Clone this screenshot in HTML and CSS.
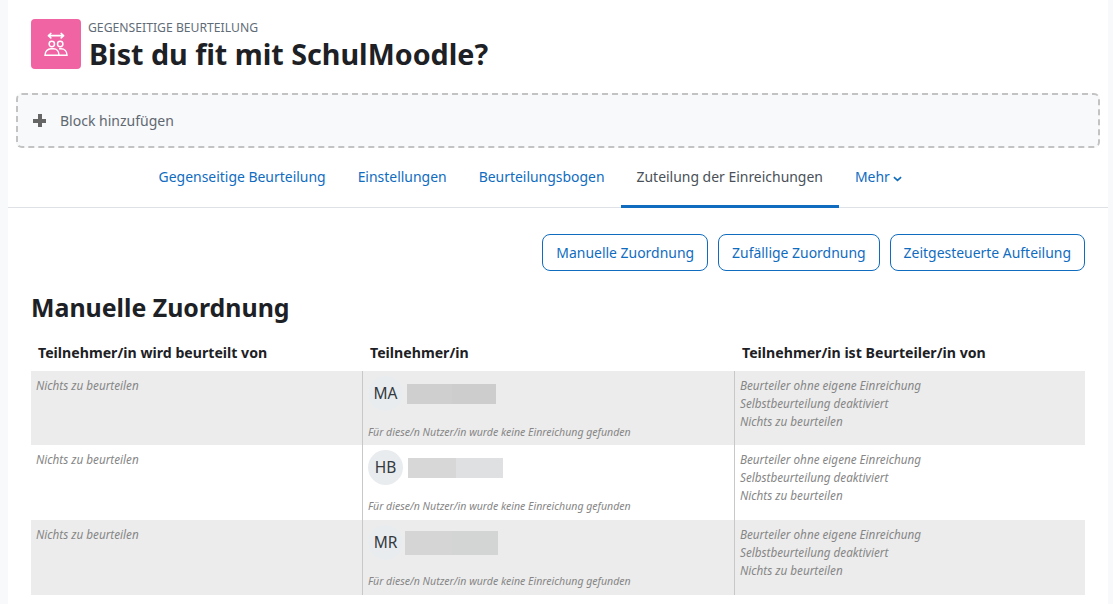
FILE: index.html
```html
<!DOCTYPE html>
<html lang="de">
<head>
<meta charset="utf-8">
<title>Manuelle Zuordnung</title>
<link rel="stylesheet" href="styles.css">
</head>
<body>
<div class="page">
  <header class="head">
    <div class="act-icon">
      <svg viewBox="0 0 24 24" width="24" height="24" fill="none" stroke="#fff" stroke-width="1.500">
        <path d="M4.500 3.700h15M6.800 1.500L4.500 3.700l2.300 2.200M17.200 1.500l2.300 2.200-2.300 2.200" stroke-width="1.700" stroke-linecap="round" stroke-linejoin="round"/>
        <circle cx="7.800" cy="12" r="2.700"/><circle cx="16.200" cy="12" r="2.700"/>
        <path d="M1 23.300c0-4 2.800-6.500 6-6.500h2.500c3 0 5.500 2.500 5.500 6.500zM15 16.800h2c3.300 0 6 2.500 6 6.500h-8"/>
      </svg>
    </div>
    <div class="titles">
      <div class="act-type">GEGENSEITIGE BEURTEILUNG</div>
      <h1>Bist du fit mit SchulMoodle?</h1>
    </div>
  </header>
  <div class="add-block"><span class="plus"></span><span>Block hinzufügen</span></div>
  <nav class="tabs">
    <a>Gegenseitige Beurteilung</a>
    <a>Einstellungen</a>
    <a>Beurteilungsbogen</a>
    <a class="active">Zuteilung der Einreichungen</a>
    <a>Mehr <svg class="chev" viewBox="0 0 10 6" width="9" height="6"><path d="M1 1l4 3.600L9 1" fill="none" stroke="#0f6cbf" stroke-width="1.800"/></svg></a>
  </nav>
  <div class="btn-row">
    <a class="btn">Manuelle Zuordnung</a>
    <a class="btn">Zufällige Zuordnung</a>
    <a class="btn">Zeitgesteuerte Aufteilung</a>
  </div>
  <h2>Manuelle Zuordnung</h2>
  <div class="alloc">
    <div class="hd"><div>Teilnehmer/in wird beurteilt von</div><div class="hd-user">Teilnehmer/in</div><div>Teilnehmer/in ist Beurteiler/in von</div></div>
    <div class="row odd first">
      <div class="c1 note">Nichts zu beurteilen</div>
      <div class="c2">
        <div class="user"><span class="avatar">MA</span><span class="blur b1"></span></div>
        <div class="note foot">Für diese/n Nutzer/in wurde keine Einreichung gefunden</div>
      </div>
      <div class="c3 note">Beurteiler ohne eigene Einreichung<br>Selbstbeurteilung deaktiviert<br>Nichts zu beurteilen</div>
    </div>
    <div class="row">
      <div class="c1 note">Nichts zu beurteilen</div>
      <div class="c2">
        <div class="user"><span class="avatar">HB</span><span class="blur b2"></span></div>
        <div class="note foot">Für diese/n Nutzer/in wurde keine Einreichung gefunden</div>
      </div>
      <div class="c3 note">Beurteiler ohne eigene Einreichung<br>Selbstbeurteilung deaktiviert<br>Nichts zu beurteilen</div>
    </div>
    <div class="row odd">
      <div class="c1 note">Nichts zu beurteilen</div>
      <div class="c2">
        <div class="user"><span class="avatar">MR</span><span class="blur b3"></span></div>
        <div class="note foot">Für diese/n Nutzer/in wurde keine Einreichung gefunden</div>
      </div>
      <div class="c3 note">Beurteiler ohne eigene Einreichung<br>Selbstbeurteilung deaktiviert<br>Nichts zu beurteilen</div>
    </div>
  </div>
</div>
</body>
</html>
```
FILE: styles.css
```css
* { box-sizing: border-box; }
html, body { margin: 0; height: 100%; }
body { background: #f8f9fa; font-family: "Noto Sans", "Open Sans", sans-serif; color: #1d2125; overflow: hidden; }
.page { margin: 0 5px 0 8px; background: #fff; height: 604px; padding: 19px 0 0; overflow: hidden; }
.head { display: flex; align-items: flex-start; gap: 7px; margin-left: 23px; height: 50px; }
.act-icon { width: 50px; height: 50px; background: #f064a4; border-radius: 4px; display: flex; align-items: center; justify-content: center; }
.titles { padding-top: 1px; }
.act-type { font-size: 12.200px; line-height: 15px; color: #5f6c77; }
h1 { font-size: 28.700px; line-height: 38px; font-weight: 700; margin: 0 0 0 1px; color: #1d2125; }
.add-block { margin: 24px 8px 0; height: 55px; background: #f8f9fa; border: 2px dashed #c3c3c3; border-radius: 6px; display: flex; align-items: center; color: #5f6871; font-size: 14px; padding-left: 15px; gap: 14px; }
.plus { width: 13px; height: 13px; background: linear-gradient(#666,#666) center/13px 4px no-repeat, linear-gradient(#666,#666) center/4px 13px no-repeat; }
.tabs { display: flex; justify-content: center; margin-top: 2px; height: 58px; border-bottom: 1px solid #dee2e6; font-size: 13.950px; padding-right: 55px; }
.tabs a { color: #0f6cbf; padding: 17px 16px 0; }
.tabs a.active { color: #495057; border-bottom: 3px solid #0f6cbf; height: 58px; }
.btn-row { display: flex; justify-content: flex-end; gap: 10px; margin: 26px 23px 0 0; }
.btn { height: 37px; border: 1px solid #0f6cbf; border-radius: 8px; color: #0f6cbf; background: #fff; font-size: 13.950px; line-height: 35px; padding: 0 13px; }
h2 { font-size: 24.900px; line-height: 30px; font-weight: 700; margin: 21px 0 0 23px; }
.alloc { margin: 0 23px; }
.hd { display: grid; grid-template-columns: 331px 373px 1fr; font-size: 14.150px; font-weight: 700; height: 49px; padding-top: 21px; line-height: 20px; }
.hd div { padding-left: 7px; }
.hd .hd-user { padding-left: 8px; }
.row { display: grid; grid-template-columns: 331px 373px 1fr; height: 75px; }
.row.first { height: 74px; }
.row.odd { background: #ececec; }
.note { font-style: italic; font-size: 11.700px; line-height: 18px; color: #868686; }
.c1 { padding: 5px 5px; }
.c2 { border-left: 1px solid #c8c8c8; border-right: 1px solid #c8c8c8; padding: 5px 5px 0; }
.c3 { padding: 5px 5px; }
.user { display: flex; align-items: center; gap: 5px; height: 35px; }
.avatar { width: 35px; height: 35px; border-radius: 50%; background: #e9ecef; display: flex; align-items: center; justify-content: center; font-size: 15.500px; color: #343a40; padding-bottom: 2px; }
.blur { height: 20px; }
.b1 { width: 89px; margin-left: -1px; background: linear-gradient(90deg, #cfcfcf 0 45px, #cdcdcd 45px); }
.b2 { width: 95px; background: linear-gradient(90deg, #d7d7d7 0 48px, #dfe0e2 48px); }
.b3 { width: 93px; height: 24px; margin-left: -3px; background: linear-gradient(90deg, #d5d5d5 0 47px, #d3d5d4 47px); }
.foot { font-size: 10.550px; margin-top: 12px; }
```
